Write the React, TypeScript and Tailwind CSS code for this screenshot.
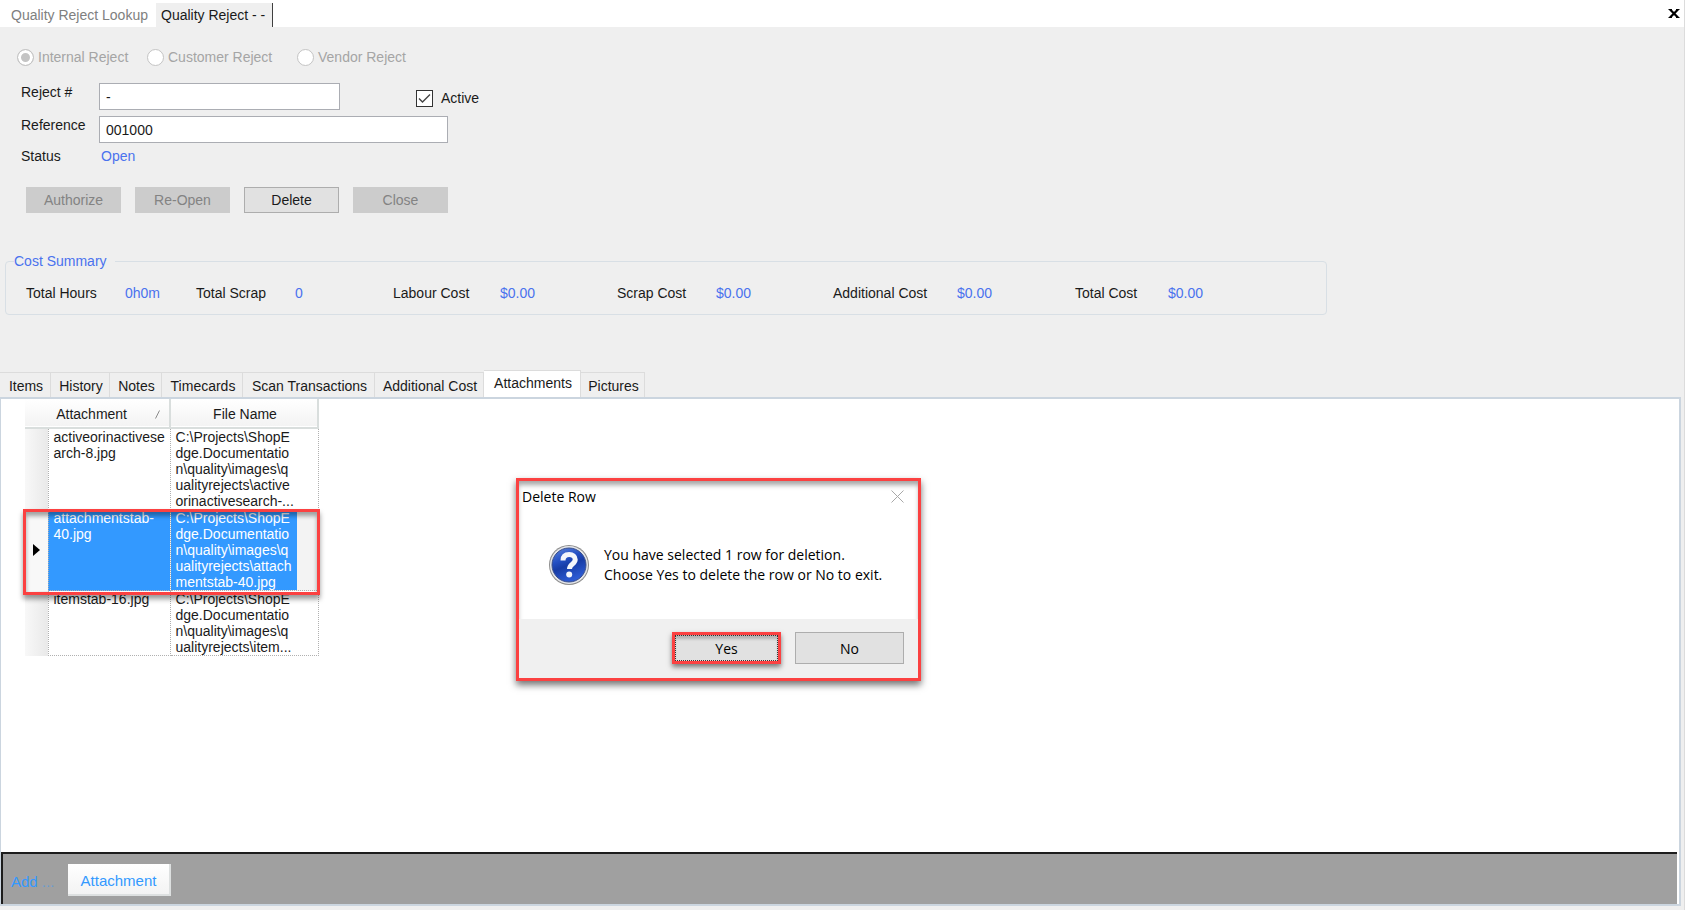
import { useState } from "react";

interface AttachmentRow {
  name: string;
  path: string;
  selected?: boolean;
}

const rejectTypes = [
  { label: "Internal Reject", checked: true, width: "w-[130px]" },
  { label: "Customer Reject", checked: false, width: "w-[150px]" },
  { label: "Vendor Reject", checked: false, width: "w-[130px]" },
];

const costs = [
  { label: "Total Hours", value: "0h0m" },
  { label: "Total Scrap", value: "0" },
  { label: "Labour Cost", value: "$0.00" },
  { label: "Scrap Cost", value: "$0.00" },
  { label: "Additional Cost", value: "$0.00" },
  { label: "Total Cost", value: "$0.00" },
];

const tabs = [
  { label: "Items", width: "w-[51px]" },
  { label: "History", width: "w-[59px]" },
  { label: "Notes", width: "w-[52px]" },
  { label: "Timecards", width: "w-[81px]" },
  { label: "Scan Transactions", width: "w-[132px]" },
  { label: "Additional Cost", width: "w-[109px]" },
  { label: "Attachments", width: "w-[97px]" },
  { label: "Pictures", width: "w-[64px]" },
];

const rows: AttachmentRow[] = [
  {
    name: "activeorinactivese\narch-8.jpg",
    path: "C:\\Projects\\ShopE\ndge.Documentatio\nn\\quality\\images\\q\nualityrejects\\active\norinactivesearch-...",
  },
  {
    name: "attachmentstab-\n40.jpg",
    path: "C:\\Projects\\ShopE\ndge.Documentatio\nn\\quality\\images\\q\nualityrejects\\attach\nmentstab-40.jpg",
    selected: true,
  },
  {
    name: "itemstab-16.jpg",
    path: "C:\\Projects\\ShopE\ndge.Documentatio\nn\\quality\\images\\q\nualityrejects\\item...",
  },
];

const QuestionIcon = () => (
  <svg width="42" height="42" viewBox="0 0 42 42" className="shrink-0">
    <defs>
      <linearGradient id="ball" x1="0" y1="0" x2="0.4" y2="1">
        <stop offset="0" stopColor="#5f86dc" />
        <stop offset="0.4" stopColor="#2450c4" />
        <stop offset="0.6" stopColor="#173ca6" />
        <stop offset="1" stopColor="#2c5ad2" />
      </linearGradient>
    </defs>
    <circle cx="21" cy="21" r="20" fill="#8d8d8d" />
    <circle cx="21" cy="21" r="19" fill="#e4e6ea" />
    <circle cx="21" cy="21" r="17" fill="url(#ball)" stroke="#3a4f8c" />
    <path
      d="M15 16.5c0-4 2.400-6 6.200-6 3.600 0 6 1.900 6 5 0 4.600-5.700 4.800-5.700 9.500"
      fill="none"
      stroke="#f4f6fb"
      strokeWidth="5"
    />
    <circle cx="21.200" cy="30.500" r="3" fill="#f4f6fb" />
  </svg>
);

const TextField = ({
  id,
  label,
  value,
  width,
}: {
  id: string;
  label: string;
  value: string;
  width: string;
}) => (
  <>
    <label htmlFor={id} className="pt-px leading-4">
      {label}
    </label>
    <input
      id={id}
      defaultValue={value}
      className={`h-[27px] border border-[#abadb3] bg-white px-1.5 outline-none ${width}`}
    />
  </>
);

const DeleteDialog = () => (
  <div
    role="dialog"
    aria-label="Delete Row"
    className="absolute left-[516px] top-[478px] flex h-[203px] w-[405px] flex-col border-[3px] border-[#fb4141] bg-white font-['Open_Sans',sans-serif] text-[14px] text-black shadow-[0_4px_7px_rgba(0,0,0,0.55),inset_0_5px_5px_-1px_rgba(0,0,0,0.35)]"
  >
    <div className="flex items-start justify-between pl-[3px] pr-3.5 pt-1.5">
      <h2 className="leading-5">Delete Row</h2>
      <button type="button" aria-label="Cancel" className="pt-[3px]">
        <svg width="13" height="13" viewBox="0 0 13 13" stroke="#a8a8a8" className="block">
          <path d="M0.500 0.500l12 12M12.500 0.500l-12 12" />
        </svg>
      </button>
    </div>
    <div className="flex flex-1 items-center gap-3.5 pl-[29px] pt-1">
      <QuestionIcon />
      <p className="whitespace-nowrap leading-5">
        You have selected 1 row for deletion.
        <br />
        Choose Yes to delete the row or No to exit.
      </p>
    </div>
    <div className="flex h-[59px] justify-end gap-3.5 bg-[#f0f0f0] pr-3.5 pt-[13px]">
      <button
        type="button"
        className="h-8 w-[109px] border-[3px] border-[#fb4141] bg-[#e1e1e1] shadow-[0_3px_5px_rgba(0,0,0,0.5),inset_0_4px_3px_rgba(0,0,0,0.2)] outline-1 -outline-offset-4 outline-dotted outline-[#333]"
      >
        Yes
      </button>
      <button
        type="button"
        className="h-8 w-[109px] border border-[#adadad] bg-[#e1e1e1]"
      >
        No
      </button>
    </div>
  </div>
);

const App = () => {
  const [activeTab, setActiveTab] = useState("Attachments");

  return (
    <div className="relative flex min-h-screen flex-col border-r border-[#dcdcdc] bg-[#efefef] font-['Liberation_Sans',Arial,sans-serif] text-[14px] text-[#1a1a1a]">
      <header className="flex h-[27px] items-end bg-white">
        <button type="button" className="h-6 w-[156px] pl-[11px] text-left text-[#808080]">
          Quality Reject Lookup
        </button>
        <button
          type="button"
          className="h-6 w-[117px] border-r border-[#404040] bg-[#efefef] pl-[5px] text-left"
        >
          Quality Reject - -
        </button>
        <button type="button" aria-label="Close" className="mb-[9px] ml-auto mr-1">
          <svg width="12" height="9" viewBox="0 0 12 9" stroke="#000" className="block">
            <path d="M2 0.500l8 8M10 0.500l-8 8" strokeWidth="2.200" />
            <path d="M0.500 0.500h3.500M8 0.500h3.500M0.500 8.500h3.500M8 8.500h3.500" />
          </svg>
        </button>
      </header>

      <form className="pl-[17px] pt-5">
        <div className="flex text-[#a5a5a5]">
          {rejectTypes.map((type) => (
            <label key={type.label} className={`flex items-center gap-1 leading-5 ${type.width}`}>
              <input
                type="radio"
                name="rejectType"
                defaultChecked={type.checked}
                disabled
                className="size-[17px] appearance-none rounded-full border border-[#c4c4c4] bg-white shadow-[inset_0_0_0_3px_#fff] checked:bg-[#c4c4c4]"
              />
              {type.label}
            </label>
          ))}
        </div>

        <div className="mt-4 flex gap-[76px] pl-1">
          <div className="grid grid-cols-[78px_auto]">
            <TextField id="reject" label="Reject #" value="-" width="w-[241px]" />
          </div>
          <label className="flex items-center gap-2 pt-1">
            <span className="grid">
              <input
                type="checkbox"
                defaultChecked
                className="col-start-1 row-start-1 size-[17px] appearance-none border border-[#333] bg-white"
              />
              <svg
                width="17"
                height="17"
                viewBox="0 0 17 17"
                className="pointer-events-none col-start-1 row-start-1"
                fill="none"
                stroke="#444"
                strokeWidth="1.400"
              >
                <path d="M3 8.500l3.500 3.500L14 4.500" />
              </svg>
            </span>
            Active
          </label>
        </div>
        <div className="mt-1.5 grid grid-cols-[78px_auto] justify-start gap-y-[5px] pl-1">
          <TextField id="reference" label="Reference" value="001000" width="w-[349px]" />
          <span className="leading-4">Status</span>
          <span className="pl-0.5 leading-4 text-[#4a72ee]">Open</span>
        </div>

        <div className="mt-[23px] flex gap-3.5 pl-[9px]">
          <button type="button" disabled className="h-[26px] w-[95px] bg-[#cccccc] text-[#838383]">
            Authorize
          </button>
          <button type="button" disabled className="h-[26px] w-[95px] bg-[#cccccc] text-[#838383]">
            Re-Open
          </button>
          <button type="button" className="h-[26px] w-[95px] border border-[#adadad] bg-[#e1e1e1]">
            Delete
          </button>
          <button type="button" disabled className="h-[26px] w-[95px] bg-[#cccccc] text-[#838383]">
            Close
          </button>
        </div>
      </form>

      <fieldset className="ml-[5px] mt-[38px] h-16 w-[1322px] rounded-sm border border-[#d8dfe5] pl-5 pt-3.5">
        <legend className="-ml-3 pr-2 leading-5 text-[#4a72ee]">Cost Summary</legend>
        <dl className="grid grid-cols-[99px_71px_99px_98px_107px_117px_99px_117px_124px_118px_93px_auto] whitespace-nowrap leading-4">
          {costs.map((cost) => (
            <div key={cost.label} className="contents">
              <dt>{cost.label}</dt>
              <dd className="text-[#4a72ee]">{cost.value}</dd>
            </div>
          ))}
        </dl>
      </fieldset>

      <nav className="mt-[55px] flex h-[27px] items-end">
        {tabs.map((tab) => (
          <button
            key={tab.label}
            type="button"
            onClick={() => setActiveTab(tab.label)}
            className={`whitespace-nowrap border-r border-t border-[#dcdcdc] pl-0.5 ${tab.width} ${
              tab.label === activeTab ? "h-[27px] bg-white pb-0.5" : "h-[25px] pt-0.5"
            }`}
          >
            {tab.label}
          </button>
        ))}
      </nav>

      <main className="mb-1 mr-[3px] flex flex-1 flex-col border-2 border-l border-[#cbd5df] bg-white">
        <div className="flex-1 pl-6">
          <table className="w-[293px] table-fixed border-collapse">
            <colgroup>
              <col className="w-[23px]" />
              <col className="w-[122px]" />
              <col className="w-[148px]" />
            </colgroup>
            <thead>
              <tr className="h-[29px] border-b-2 border-[#d9dedd] bg-linear-to-b from-white to-[#f3f3f3]">
                <th colSpan={2} className="border-r-2 border-[#d9dedd] pt-0.5 font-normal">
                  <div className="flex items-center justify-end gap-7 pr-2">
                    Attachment
                    <svg width="6" height="9" viewBox="0 0 6 9" stroke="#8a8a8a">
                      <path d="M0.500 8.500L4.500 0.500" />
                    </svg>
                  </div>
                </th>
                <th className="border-r-2 border-[#d9dedd] pl-0.5 pt-0.5 font-normal">File Name</th>
              </tr>
            </thead>
            <tbody>
              {rows.map((row) => (
                <tr
                  key={row.name}
                  className={`align-top leading-4 ${row.selected ? "text-white" : ""}`}
                >
                  <td
                    className={`p-0 align-middle ${
                      row.selected
                        ? "bg-[#f8f8f8]"
                        : "bg-linear-to-r from-[#f8f8f8] to-[#e9e9e9]"
                    }`}
                  >
                    {row.selected && (
                      <svg width="7" height="12" viewBox="0 0 7 12" className="ml-2">
                        <path d="M0 0l7 6-7 6z" />
                      </svg>
                    )}
                  </td>
                  <td
                    className={`whitespace-pre border border-dotted border-[#b0b0b0] py-0 pl-[5px] pr-0 ${
                      row.selected ? "bg-[#3399ff]" : ""
                    }`}
                  >
                    {row.name}
                  </td>
                  <td
                    className={`border border-dotted border-[#b0b0b0] p-0 ${
                      row.selected ? "bg-[#f3f3f3]" : ""
                    }`}
                  >
                    <div
                      className={`w-[126px] whitespace-pre pl-[5px] ${
                        row.selected ? "bg-[#3399ff]" : ""
                      }`}
                    >
                      {row.path}
                    </div>
                  </td>
                </tr>
              ))}
            </tbody>
          </table>
        </div>

        <footer className="mr-0.5 flex h-[52px] items-center gap-3.5 border-l-2 border-t-2 border-[#1c1c1c] bg-[#a0a0a0] pl-2 pt-0.5 text-[15px] text-[#3399ff]">
          <span className="w-[43px] whitespace-nowrap pt-1">
            Add <span className="opacity-50">...</span>
          </span>
          <button
            type="button"
            className="h-8 w-[103px] border-b-2 border-r-2 border-[#dde0e0] bg-linear-to-b from-white to-[#f3f3f3] pt-1"
          >
            Attachment
          </button>
        </footer>
      </main>

      {/* marker around the row that is about to be deleted */}
      <div className="pointer-events-none absolute left-[23px] top-[509px] h-[86px] w-[297px] border-[3px] border-[#fb4141] shadow-[0_4px_5px_rgba(0,0,0,0.4),inset_0_4px_4px_rgba(0,0,0,0.35)]" />

      <DeleteDialog />
    </div>
  );
};

export default App;
